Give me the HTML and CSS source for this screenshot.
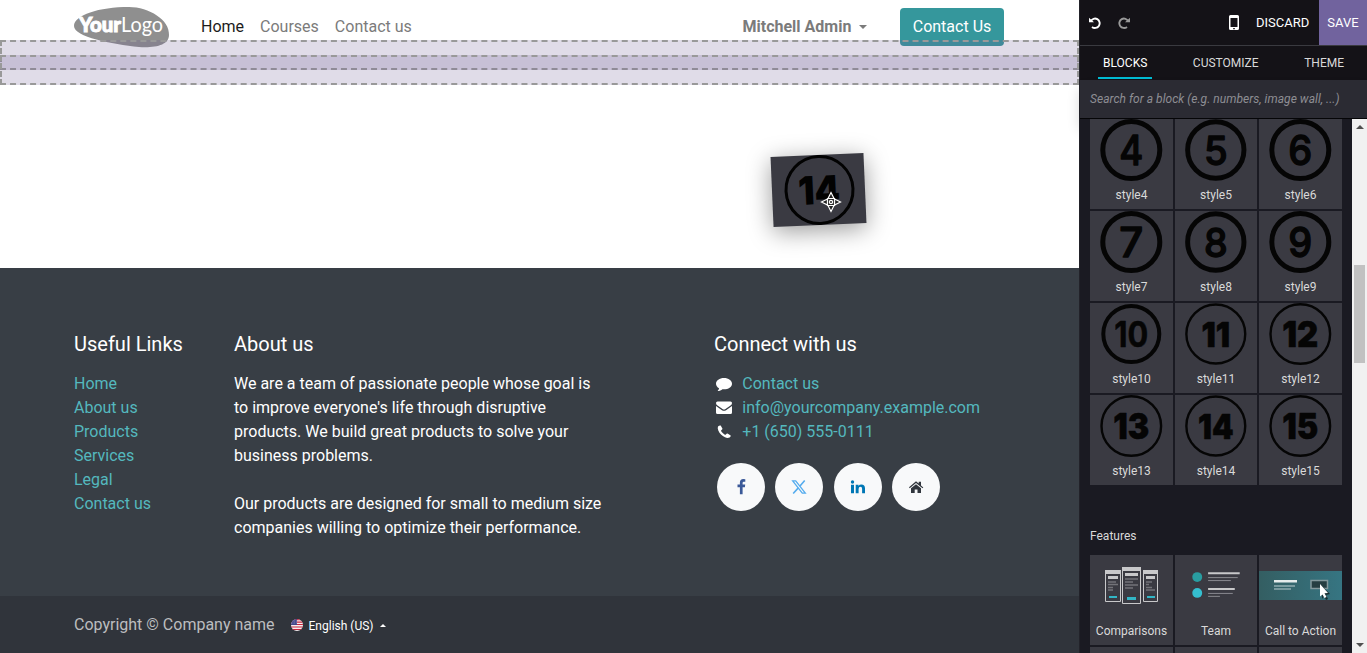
FILE: index.html
```
<!DOCTYPE html>
<html lang="en">
<head>
<meta charset="utf-8">
<title>Website Builder</title>
<link rel="stylesheet" href="styles.css">
</head>
<body>
<div class="app">
  <main class="page">
    <header class="navbar">
      <svg class="logo" width="96" height="42" viewBox="0 0 96 42">
        <path d="M0 19C0 8 25 0 55 0C75 0 96 13 95 28C95 38 82 41 65 40C38 37 0 30 0 19Z" fill="#8f8f8f"/>
        <text x="5" y="25" class="logo-bold" textLength="42" lengthAdjust="spacingAndGlyphs">Your</text>
        <text x="47" y="25" class="logo-light" textLength="42" lengthAdjust="spacingAndGlyphs">Logo</text>
      </svg>
      <nav class="menu"><a class="active">Home</a><a>Courses</a><a>Contact us</a></nav>
      <div class="user">Mitchell Admin<i class="caret"></i></div>
      <a class="cta">Contact Us</a>
    </header>
    <div class="dropzone first"></div>
    <div class="dropzone second"></div>
    <div class="canvas"></div>
    <footer class="footer">
      <section class="col links"><h5>Useful Links</h5><a>Home</a><a>About us</a><a>Products</a><a>Services</a><a>Legal</a><a>Contact us</a></section>
      <section class="col about"><h5>About us</h5>
        <p>We are a team of passionate people whose goal is<br>to improve everyone's life through disruptive<br>products. We build great products to solve your<br>business problems.</p>
        <p>Our products are designed for small to medium size<br>companies willing to optimize their performance.</p></section>
      <section class="col connect"><h5>Connect with us</h5>
        <div class="contact"><svg width="16" height="16" viewBox="0 0 16 16"><path d="M8 2C3.500 2 0 4.500 0 7.700C0 9.600 1.200 11.200 3.100 12.300C2.900 13.500 2.300 14.300 1.600 15.100C3.600 14.900 5.300 14.200 6.400 13.200C11.500 13.800 16 11.400 16 7.700C16 4.500 12.500 2 8 2Z"/></svg><a>Contact us</a></div>
        <div class="contact"><svg width="16" height="16" viewBox="0 0 16 16"><path d="M0 3Q0 1.500 1.500 1.500H14.500Q16 1.500 16 3Q16 4.500 14.500 5.500L9.500 9Q8 10 6.500 9L1.500 5.500Q0 4.500 0 3ZM0 6L6 10.200Q8 11.500 10 10.200L16 6V12.500Q16 14 14.500 14H1.500Q0 14 0 12.500Z"/></svg><a>info@yourcompany.example.com</a></div>
        <div class="contact"><svg width="16" height="16" viewBox="0 0 16 16"><path d="M2 2.500Q3.500 1 4.700 1.500L6.500 4.800Q6.500 5.500 5 6.500Q5 7.500 7 9.300Q8.800 11 9.700 10.800Q10.800 9.300 11.500 9.500L14.700 11.400Q15 12.100 13.600 13.500Q11.500 14.500 9 13.300C6 11.900 3.600 9.500 2.300 6.500Q1.300 4.100 2 2.500Z"/></svg><a>+1 (650) 555-0111</a></div>
        <div class="social">
          <span><svg width="16" height="16" viewBox="0 0 16 16"><path fill="#3b5998" d="M12.300.2V2.700H10.800Q9.600 2.700 9.600 3.900V5.600H12.200L11.900 8.300H9.600V15.300H6.900V8.300H4.500V5.600H6.900V3.600Q6.900 0 10.300 0Z"/></svg></span>
          <span><svg width="16" height="16" viewBox="0 0 16 16" fill="none" stroke="#55acee"><path stroke-width="1.300" d="M1.700 1.900H4.700L14.300 14.100H11.300Z"/><path stroke-width="1.600" d="M13.700 1.400L8.800 7.200M7.300 8.900L2.200 14.500"/></svg></span>
          <span><svg width="16" height="16" viewBox="0 0 16 16" fill="#0077b5"><circle cx="2.500" cy="3" r="1.700"/><path d="M1 5.700H4V14.200H1ZM5.700 5.700H8.500V6.900Q9.400 5.500 11.400 5.500Q15 5.500 15 9.300V14.200H12.100V9.700Q12.100 7.800 10.500 7.800Q8.600 7.800 8.600 9.900V14.200H5.700Z"/></svg></span>
          <span><svg width="16" height="16" viewBox="0 0 16 16" fill="#31363d"><path d="M8 5.200L13 9.300V14H9.500V10.500H6.700V14H3V9.300ZM1 8.200L8 2.200L10.700 4.500V2.700H13V6.500L15.300 8.400L14.500 9.200L8 3.900L1.700 9.200Z"/></svg></span>
        </div></section>
    </footer>
    <div class="copyright"><span>Copyright © Company name</span>
      <svg class="flag" width="12" height="12" viewBox="0 0 12 12"><defs><clipPath id="round"><circle cx="6" cy="6" r="6"/></clipPath></defs><g clip-path="url(#round)"><path fill="#f7eef0" d="M0 0H12V12H0Z"/><path stroke="#c8243c" stroke-width="1.200" d="M0 .6H12M0 3.100H12M0 5.500H12M0 8H12M0 10.500H12"/><path fill="#45478b" d="M0 0H6V6H0Z"/><path stroke="#c9c9e0" stroke-width=".6" stroke-dasharray=".7 1" d="M0 2H6M0 4H6"/></g></svg>
      <span class="lang">English (US)</span><i class="caret up"></i></div>
  </main>

  <aside class="sidebar">
    <div class="toolbar">
      <svg class="undo" width="12" height="12" viewBox="0 0 12 12"><path d="M1.700 4.300A4.700 4.700 0 1 1 3 9.900" fill="none" stroke="#fff" stroke-width="1.900"/><path d="M0 .8L5 5.200H0Z" fill="#fff"/></svg>
      <svg class="redo" width="12" height="12" viewBox="0 0 12 12"><path d="M10.300 4.300A4.700 4.700 0 1 0 9 9.900" fill="none" stroke="#999" stroke-width="1.900"/><path d="M12 .8L7 5.200H12Z" fill="#999"/></svg>
      <svg class="mobile" width="10" height="15" viewBox="0 0 10 15"><path fill="#fff" fill-rule="evenodd" d="M1.500 0H8.500Q10 0 10 1.500V13.500Q10 15 8.500 15H1.500Q0 15 0 13.500V1.500Q0 0 1.500 0ZM1.500 3V12H8.500V3ZM4.200 13H5.800V14.200H4.200Z"/></svg>
      <span class="discard">DISCARD</span><span class="save">SAVE</span>
    </div>
    <div class="tabs"><span class="on">BLOCKS</span><span>CUSTOMIZE</span><span>THEME</span></div>
    <div class="search">Search for a block (e.g. numbers, image wall, ...)</div>
    <div class="panel">
      <div class="scroll">
        <div class="grid" id="styles"></div>
        <h6>Features</h6>
        <div class="grid features">
          <div class="tile"><svg width="83" height="62" viewBox="0 0 83 62">
            <g fill="none" stroke="#c8c8ca"><path d="M15.500 16V46.500H30.500V16M32.500 13V48.500H50.500V13M53.500 16V46.500H67.500V16"/></g>
            <path fill="#c8c8ca" d="M15 15H31V19H15ZM32 12H51V16H32ZM53 15H68V19H53ZM18 21H28V24H18ZM35 18H48V21H35ZM56 21H65V24H56Z"/>
            <path stroke="#737379" stroke-width="1.500" d="M18 27H26M18 29.500H28M18 32.500H23M18 35H23M35 24H48M35 27H43M35 30H48M35 33H43M56 27H62M56 29.500H59M56 32.500H62M56 35H65"/>
            <path fill="#32b5c5" d="M19 41H27V43H19ZM37 42H46V45H37ZM57 41H65V43H57Z"/></svg><span>Comparisons</span></div>
          <div class="tile"><svg width="83" height="62" viewBox="0 0 83 62"><circle cx="22.500" cy="22" r="5" fill="#299da1"/><circle cx="22.500" cy="38" r="5" fill="#35bfd0"/><path fill="#c8c8ca" d="M33.500 17H65.500V19H33.500ZM33.500 33H60.500V35H33.500Z"/><path stroke="#8a8a90" d="M33.500 22.500H63.500M33.500 25.500H56.500M33.500 38.500H58.500M33.500 41.500H45.500"/></svg><span>Team</span></div>
          <div class="tile"><svg width="83" height="62" viewBox="0 0 83 62"><defs><linearGradient id="teal"><stop stop-color="#345e62"/><stop offset="1" stop-color="#367582"/></linearGradient></defs><path fill="url(#teal)" d="M0 16H83V45H0Z"/><path fill="#e5ecec" d="M15 25H38V27.500H15Z"/><path stroke="#90adb1" stroke-width="1.700" d="M15 31H36M15 34H32"/><path fill="#263e42" stroke="#83989c" stroke-width="1.500" d="M52 25.500H68.500V33.500H52Z"/><path fill="#192e31" d="M63 31L71 39L67 40L69 44L67 45L65 41L63 44Z"/><path fill="#fff" d="M61 29L69 38L65.500 38.300L67.500 42L65.500 43L63.500 39.500L61 41.500Z"/></svg><span>Call to Action</span></div>
          <div class="tile"></div><div class="tile"></div><div class="tile"></div>
        </div>
      </div>
      <div class="scrollbar"><i class="arrow top"></i><i class="thumb"></i><i class="arrow bottom"></i></div>
    </div>
  </aside>
</div>
<div class="dragged"><svg width="93" height="70" viewBox="0 0 93 70"><circle cx="47.500" cy="35" r="33.500" fill="none" stroke="#020202" stroke-width="3"/><text x="47" y="49" class="drag-num" textLength="42" lengthAdjust="spacingAndGlyphs">14</text></svg></div>
<svg class="cursor" width="22" height="22" viewBox="0 0 22 22" fill="#222" stroke="#fff" stroke-width="1.200"><path d="M8 7.500L11 1.500L14 7.500ZM8 14.500L11 20.500L14 14.500ZM7.500 8L1.500 11L7.500 14ZM14.500 8L20.500 11L14.500 14Z"/><path d="M7.500 7.500H14.500V14.500H7.500Z"/><circle cx="11" cy="11" r="1.600"/></svg>
<script src="blocks.js"></script>
</body>
</html>
```
FILE: styles.css
```
* { box-sizing: border-box; }
body { margin: 0; font-family: Roboto, "Liberation Sans", sans-serif; font-size: 16px; line-height: 24px; overflow: hidden; background: #fff; }
.app { display: flex; width: 1367px; height: 653px; overflow: hidden; }
.page { position: relative; display: flex; flex-direction: column; width: 1079px; flex: none; }
.navbar { display: flex; align-items: flex-start; height: 53px; padding-left: 74px; color: #7b7b7b; }
.logo { margin-top: 7px; flex: none; }
.logo-bold { font: 900 21px Lato, sans-serif; fill: #fff; stroke: #fff; stroke-width: 1px; }
.logo-light { font: 400 21px Lato, sans-serif; fill: #fff; }
.menu { display: flex; gap: 16px; margin: 15px 0 0 31px; width: 541.500px; }
.menu .active { color: #1c1c1c; }
.user { margin-top: 15px; width: 157.500px; font-weight: 700; flex: none; white-space: nowrap; }
.caret { display: inline-block; border: 4.500px solid transparent; border-top-color: currentColor; border-bottom: 0; margin-left: 8px; vertical-align: 3px; }
.caret.up { border: 3px solid transparent; border-bottom-color: #fff; border-top: 0; margin: 1px 0 0 6px; }
.cta { margin-top: 8px; width: 104px; height: 38px; padding-top: 7px; border-radius: 4px; background: #35979c; color: #fff; text-align: center; flex: none; }
.dropzone { position: absolute; left: 0; width: 1079px; height: 30px; border: 2px dashed #999; background: rgba(108, 91, 145, .21); }
.first { top: 40px; }
.second { top: 55px; }
.canvas { height: 215px; flex: none; }
.footer { display: flex; height: 328px; padding: 64px 0 0 74px; background: #383e45; color: #fff; flex: none; }
h5 { margin: 0 0 16px; font-size: 20px; line-height: 24px; font-weight: 400; }
.col a { color: #54b8be; }
.links { width: 160px; }
.links a { display: block; }
.about { width: 480px; }
.about p { margin: 0 0 24px; white-space: nowrap; }
.contact { display: flex; align-items: center; gap: 10.300px; padding-left: 2px; fill: #fff; }
.social { display: flex; gap: 10.400px; padding: 19px 0 0 3px; }
.social span { display: grid; place-items: center; width: 48px; height: 48px; border-radius: 50%; background: #f8f9fa; }
.copyright { display: flex; align-items: center; height: 57px; padding-left: 74px; background: #30343b; color: #bcbdbf; flex: none; }
.flag { margin: 1px 6px 0 16px; }
.lang { font-size: 12px; color: #fff; padding-top: 2px; }

.sidebar { display: flex; flex-direction: column; position: relative; width: 288px; flex: none; background: #1a1a22; border-left: 1px solid #222229; color: #d9d9d9; font-size: 12px; }
.toolbar { display: flex; align-items: center; height: 46px; background: #141217; border-bottom: 1px solid #3a3a40; color: #fff; font-size: 13px; flex: none; }
.undo { margin-left: 9px; }
.redo { margin-left: 17px; }
.mobile { margin-left: 99px; }
.discard { margin-left: 17px; width: 63px; flex: 1; white-space: nowrap; }
.save { width: 48px; height: 45px; line-height: 45px; text-align: center; background: #71639e; }
.tabs { display: flex; justify-content: space-between; height: 34px; padding: 0 18px; background: #141217; line-height: 34px; flex: none; }
.tabs span { padding: 0 5px; }
.tabs .on { border-bottom: 2px solid #01bad2; color: #fff; height: 33px; }
.search { height: 39px; padding-left: 10px; line-height: 38px; background: #2b2b33; border-bottom: 1px solid #050507; color: #8e8e93; font-style: italic; letter-spacing: .040px; flex: none; white-space: nowrap; box-shadow: 0 10px 14px rgba(0, 0, 0, .16); }
.panel { display: flex; height: 534px; flex: none; position: relative; }
.scroll { width: 272px; padding-left: 10px; overflow: hidden; background: #1a1a22; }
.grid { display: grid; grid-template-columns: 83px 82px 83px; grid-auto-rows: 90px; gap: 2px; }
.tile { display: flex; flex-direction: column; background: #3a3a42; overflow: hidden; }
.tile svg { flex: none; width: 100%; }
.tile span { text-align: center; line-height: 16px; margin-top: 6px; white-space: nowrap; }
.features .tile span { line-height: 16px; }
h6 { margin: 39px 0 6px; font-size: 12px; line-height: 25px; font-weight: 400; }
.num { fill: #050505; text-anchor: middle; font-family: Inter, sans-serif; stroke: #050505; stroke-linejoin: round; }
.scrollbar { display: flex; flex-direction: column; align-items: center; width: 15px; background: #f1f1f1; }
.arrow { border: 4px solid transparent; }
.arrow.top { border-bottom-color: #505050; border-top: 0; margin-top: 6px; }
.arrow.bottom { border-top-color: #505050; border-bottom: 0; margin: auto 0 6px; }
.thumb { width: 11px; height: 98px; margin-top: 136px; background: #c1c1c1; }
.dragged { position: absolute; left: 772px; top: 155px; width: 93px; height: 70px; background: #3a3a42; transform: rotate(-2.500deg); box-shadow: 0 5px 25px rgba(0, 0, 0, .4); }
.dragged svg { display: block; }
.drag-num { font: 900 39px Inter, sans-serif; text-anchor: middle; fill: #020202; }
.cursor { position: absolute; left: 820px; top: 191px; }
```
FILE: blocks.js
```
// Fill the numbered style tiles.
const grid = document.getElementById('styles');
for (let n = 4; n <= 15; n++) {
  const single = n < 10;
  const ring = single ? 5 : n === 10 ? 4 : 2.4;
  const radius = (n === 10 ? 30 : 31) - ring / 2;
  const size = single ? 40.5 : 35;
  const weight = single ? 500 : n === 10 ? 700 : 900;
  const width = single ? 24 : n === 11 ? 29 : n === 10 ? 34 : 36;
  const tile = document.createElement('div');
  tile.className = 'tile';
  tile.innerHTML = `<svg width="83" height="62" viewBox="0 0 83 62">
    <circle cx="41.300" cy="31" r="${radius}" fill="none" stroke="#050505" stroke-width="${ring}"/>
    <text class="num" x="41.300" y="${single ? 45.7 : 43.8}" font-size="${size}" font-weight="${weight}" stroke-width="${single ? 1.3 : .5}" textLength="${width}" lengthAdjust="spacingAndGlyphs">${n}</text>
  </svg><span>style${n}</span>`;
  grid.append(tile);
}
```
